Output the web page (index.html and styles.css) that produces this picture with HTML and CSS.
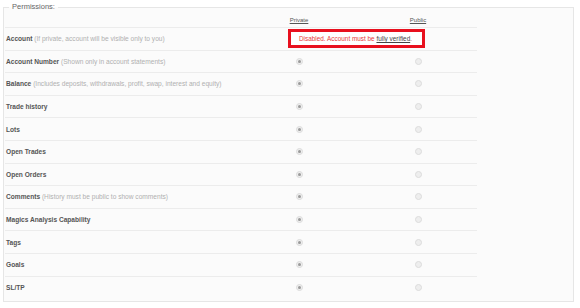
FILE: index.html
```html
<!DOCTYPE html>
<html>
<head>
<meta charset="utf-8">
<link rel="stylesheet" href="styles.css">
</head>
<body>
<fieldset class="perms">
  <legend class="perms-title">Permissions:</legend>
  <div class="grid">
    <div class="row head">
      <div class="label"></div>
      <div class="col priv"><span class="col-title">Private</span></div>
      <div class="spacer"></div>
      <div class="col pub"><span class="col-title">Public</span></div>
    </div>
    <div class="row">
      <div class="label"><b>Account</b> <span class="desc">(If private, account will be visible only to you)</span></div>
      <div class="notice">Disabled. Account must be <a class="notice-link">fully verified</a>.</div>
    </div>
    <div class="row">
      <div class="label"><b>Account Number</b> <span class="desc">(Shown only in account statements)</span></div>
      <div class="col priv"><span class="radio on"></span></div><div class="spacer"></div><div class="col pub"><span class="radio"></span></div>
    </div>
    <div class="row">
      <div class="label"><b>Balance</b> <span class="desc">(Includes deposits, withdrawals, profit, swap, interest and equity)</span></div>
      <div class="col priv"><span class="radio on"></span></div><div class="spacer"></div><div class="col pub"><span class="radio"></span></div>
    </div>
    <div class="row">
      <div class="label"><b>Trade history</b></div>
      <div class="col priv"><span class="radio on"></span></div><div class="spacer"></div><div class="col pub"><span class="radio"></span></div>
    </div>
    <div class="row">
      <div class="label"><b>Lots</b></div>
      <div class="col priv"><span class="radio on"></span></div><div class="spacer"></div><div class="col pub"><span class="radio"></span></div>
    </div>
    <div class="row">
      <div class="label"><b>Open Trades</b></div>
      <div class="col priv"><span class="radio on"></span></div><div class="spacer"></div><div class="col pub"><span class="radio"></span></div>
    </div>
    <div class="row">
      <div class="label"><b>Open Orders</b></div>
      <div class="col priv"><span class="radio on"></span></div><div class="spacer"></div><div class="col pub"><span class="radio"></span></div>
    </div>
    <div class="row">
      <div class="label"><b>Comments</b> <span class="desc">(History must be public to show comments)</span></div>
      <div class="col priv"><span class="radio on"></span></div><div class="spacer"></div><div class="col pub"><span class="radio"></span></div>
    </div>
    <div class="row">
      <div class="label"><b>Magics Analysis Capability</b></div>
      <div class="col priv"><span class="radio on"></span></div><div class="spacer"></div><div class="col pub"><span class="radio"></span></div>
    </div>
    <div class="row">
      <div class="label"><b>Tags</b></div>
      <div class="col priv"><span class="radio on"></span></div><div class="spacer"></div><div class="col pub"><span class="radio"></span></div>
    </div>
    <div class="row">
      <div class="label"><b>Goals</b></div>
      <div class="col priv"><span class="radio on"></span></div><div class="spacer"></div><div class="col pub"><span class="radio"></span></div>
    </div>
    <div class="row last">
      <div class="label"><b>SL/TP</b></div>
      <div class="col priv"><span class="radio on"></span></div><div class="spacer"></div><div class="col pub"><span class="radio"></span></div>
    </div>
  </div>
</fieldset>
</body>
</html>
```
FILE: styles.css
```css
html, body {
  margin: 0;
  padding: 0;
  background: #ffffff;
}
body {
  padding: 2px 6px 0 3px;
  font-family: "Liberation Sans", Arial, sans-serif;
}
.perms {
  margin: 0;
  padding: 0 0 2px 1px;
  border: 1px solid #e6e6e6;
  background: #fbfbfb;
  min-width: 0;
}
.perms-title {
  margin-left: 4px;
  padding: 0 3px;
  font-size: 7.5px;
  line-height: 10px;
  color: #666;
}
.grid {
  width: 472px;
  display: flex;
  flex-direction: column;
}
.row {
  display: grid;
  grid-template-columns: 282px 24px 95px 24px 47px;
  align-items: center;
  height: 22.6px;
  box-sizing: border-box;
  border-bottom: 1px solid #ececec;
  font-size: 6.6px;
}
.row.head {
  height: 15px;
  margin-top: 1px;
}
.row.last {
  border-bottom: none;
}
.label {
  padding-left: 1px;
  color: #555;
  white-space: nowrap;
}
.label b {
  font-weight: bold;
}
.desc {
  color: #b0b0b0;
}
.col {
  display: flex;
  justify-content: center;
  align-items: center;
}
.col-title {
  color: #555;
  text-decoration: underline;
  font-size: 6px;
}
.radio {
  width: 7px;
  height: 7px;
  border-radius: 50%;
  box-sizing: border-box;
  border: 1px solid #dcdcdc;
  background: #eeeeee;
  display: flex;
  align-items: center;
  justify-content: center;
}
.radio.on::after {
  content: "";
  width: 3px;
  height: 3px;
  border-radius: 50%;
  background: #9a9a9a;
}
.notice {
  grid-column: 2 / 6;
  justify-self: start;
  margin-left: 1px;
  border: 3px solid #e8101e;
  background: #fff;
  color: #e83a3a;
  padding: 3px 8px;
  line-height: 7px;
  font-size: 6.4px;
  white-space: nowrap;
  width: 137px;
  box-sizing: border-box;
}
.notice-link {
  color: #444;
  text-decoration: underline;
}
```
